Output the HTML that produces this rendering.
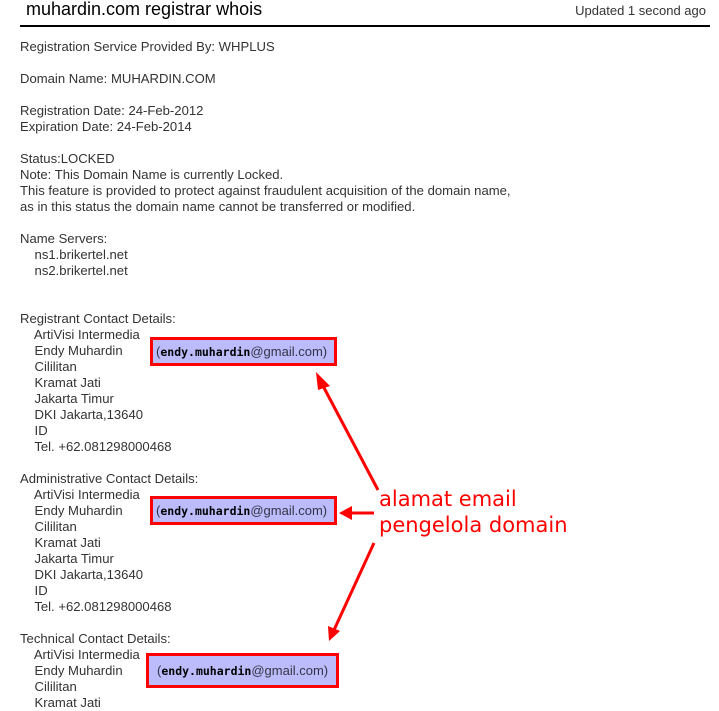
<!DOCTYPE html>
<html><head><meta charset="utf-8"><style>
body{margin:0;width:719px;height:710px;background:#fff;overflow:hidden;position:relative;font-family:"Liberation Sans",Arial,sans-serif;}
.t{position:absolute;left:26px;top:-1px;font-size:18px;color:#000;}
.u{position:absolute;right:13px;top:3px;font-size:13px;color:#333;}
.hr{position:absolute;left:20px;top:25px;width:690px;height:2px;background:#000;}
.b{position:absolute;left:20px;top:39px;font-size:13.1px;line-height:16px;color:#333;white-space:pre;}
.e{position:absolute;box-sizing:border-box;border:3px solid #f00;background:#bcbcfc;font-size:13px;color:#334;padding-left:3px;white-space:nowrap;}
.e b{font-family:"DejaVu Sans Mono","Liberation Mono",monospace;font-size:11.5px;color:#000;}
.a{position:absolute;left:379px;top:486px;font-family:"DejaVu Sans",sans-serif;font-size:21px;line-height:26px;color:#f00;}
</style></head><body>
<div class="t">muhardin.com registrar whois</div>
<div class="u">Updated 1 second ago</div>
<div class="hr"></div>
<div class="b">Registration Service Provided By: WHPLUS

Domain Name: MUHARDIN.COM

Registration Date: 24-Feb-2012
Expiration Date: 24-Feb-2014

Status:LOCKED
Note: This Domain Name is currently Locked.
This feature is provided to protect against fraudulent acquisition of the domain name,
as in this status the domain name cannot be transferred or modified.

Name Servers:
    ns1.brikertel.net
    ns2.brikertel.net


Registrant Contact Details:
    ArtiVisi Intermedia
    Endy Muhardin
    Cililitan
    Kramat Jati
    Jakarta Timur
    DKI Jakarta,13640
    ID
    Tel. +62.081298000468

Administrative Contact Details:
    ArtiVisi Intermedia
    Endy Muhardin
    Cililitan
    Kramat Jati
    Jakarta Timur
    DKI Jakarta,13640
    ID
    Tel. +62.081298000468

Technical Contact Details:
    ArtiVisi Intermedia
    Endy Muhardin
    Cililitan
    Kramat Jati</div>
<div class="e" style="left:150px;top:337px;width:187px;height:29px;line-height:23px;">(<b>endy.muhardin</b>@gmail.com)</div>
<div class="e" style="left:150px;top:496px;width:187px;height:29px;line-height:23px;">(<b>endy.muhardin</b>@gmail.com)</div>
<div class="e" style="left:146px;top:653px;width:193px;height:35px;line-height:29px;padding-left:8px;">(<b>endy.muhardin</b>@gmail.com)</div>
<div class="a">alamat email<br>pengelola domain</div>
<svg style="position:absolute;left:0;top:0" width="719" height="710">
<g stroke="#f00" stroke-width="3" fill="#f00">
<line x1="378" y1="490" x2="322" y2="384"/>
<polygon points="316,372 330,386 318,390" stroke="none"/>
<line x1="374" y1="513" x2="350" y2="513"/>
<polygon points="339,513 352,506 352,520" stroke="none"/>
<line x1="374" y1="543" x2="334" y2="630"/>
<polygon points="329,641 328,626 340,631" stroke="none"/>
</g></svg>
</body></html>
